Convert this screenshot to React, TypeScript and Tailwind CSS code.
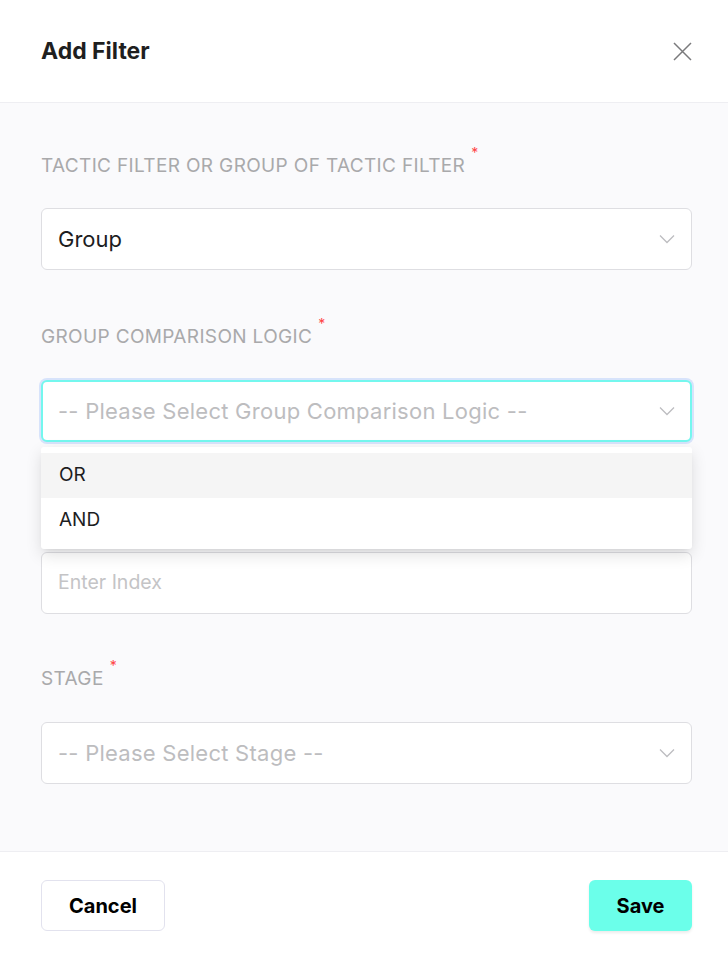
import React from 'react';

const Asterisk = () => (
  <span className="relative -top-[14px] ml-[6px] text-[14px] leading-none text-[#f44]">*</span>
);

const Label = ({ children }: { children: React.ReactNode }) => (
  <div className="h-6 text-[19px] leading-6 uppercase text-[#a9a9ab] tracking-[0.35px]">
    {children}
    <Asterisk />
  </div>
);

const Chevron = () => (
  <svg width="16" height="10" viewBox="0 0 16 10" fill="none" className="shrink-0">
    <path d="M1 1.5 L8 8.5 L15 1.5" stroke="#bdbdc0" strokeWidth="1.3" />
  </svg>
);

const SelectBox = ({ value, placeholder, focused }: { value?: string; placeholder?: string; focused?: boolean }) => (
  <div
    className={
      focused
        ? 'h-[62px] bg-white rounded-md border-2 border-[#74f7ee] shadow-[0_0_0_2px_#d7e3fb] flex items-center justify-between pl-[15px] pr-[15px]'
        : 'h-[62px] bg-white rounded-md border border-[#dedee2] flex items-center justify-between pl-4 pr-4'
    }
  >
    {value ? (
      <span className="text-[22px] text-[#1d1d1f]">{value}</span>
    ) : (
      <span className="text-[22px] text-[#bdbdbf] tracking-[0.25px]">{placeholder}</span>
    )}
    <Chevron />
  </div>
);

export default function App() {
  return (
    <div className="w-[728px] h-[955px] bg-white flex flex-col" style={{ fontFamily: 'Inter, "Liberation Sans", sans-serif' }}>
      {/* Header */}
      <div className="h-[103px] shrink-0 border-b border-[#eeeef2] flex items-center justify-between pl-[41px] pr-[36px]">
        <h1 className="text-[23px] font-bold text-[#1f1f1f]">Add Filter</h1>
        <svg width="19" height="19" viewBox="0 0 19 19" fill="none">
          <path d="M1 1 L18 18 M18 1 L1 18" stroke="#7a7a7c" strokeWidth="1.5" />
        </svg>
      </div>

      {/* Body */}
      <div className="flex-1 bg-[#fafafc] pl-[41px] pr-[36px] pt-[51px] flex flex-col">
        <Label>Tactic Filter or Group of Tactic Filter</Label>
        <div className="mt-[30px]">
          <SelectBox value="Group" />
        </div>

        <div className="mt-[55px]">
          <Label>Group Comparison Logic</Label>
        </div>
        <div className="relative mt-[31px]">
          <SelectBox placeholder="-- Please Select Group Comparison Logic --" focused />
          <div className="absolute left-0 right-0 top-[67px] z-10 bg-white rounded-[3px] py-[6px] shadow-[0_6px_16px_rgba(0,0,0,0.12),0_3px_6px_-4px_rgba(0,0,0,0.14)]">
            <div className="h-[45px] bg-[#f5f5f5] flex items-center px-[18px] text-[19px] text-[#1d1d1f]">OR</div>
            <div className="h-[45px] flex items-center px-[18px] text-[19px] text-[#1d1d1f]">AND</div>
          </div>
        </div>

        <div className="mt-[55px]">
          <Label>Index</Label>
        </div>
        <div className="mt-[31px] h-[62px] bg-white rounded-md border border-[#dedee2] flex items-center pl-4">
          <span className="text-[19.5px] text-[#c4c4c6]">Enter Index</span>
        </div>

        <div className="mt-[53px]">
          <Label>Stage</Label>
        </div>
        <div className="mt-[31px]">
          <SelectBox placeholder="-- Please Select Stage --" />
        </div>
      </div>

      {/* Footer */}
      <div className="h-[104px] shrink-0 border-t border-[#eeeef2] bg-white flex items-start justify-between pr-[36px] pt-[28px] pl-[41px]">
        <button className="h-[51px] w-[124px] rounded-md border border-[#e2e2ee] bg-white text-[20px] font-bold text-black">
          Cancel
        </button>
        <button className="h-[51px] w-[103px] rounded-md bg-[#6bffea] text-[20px] font-bold text-black shadow-[0_2px_3px_rgba(0,0,0,0.08)]">
          Save
        </button>
      </div>
    </div>
  );
}
